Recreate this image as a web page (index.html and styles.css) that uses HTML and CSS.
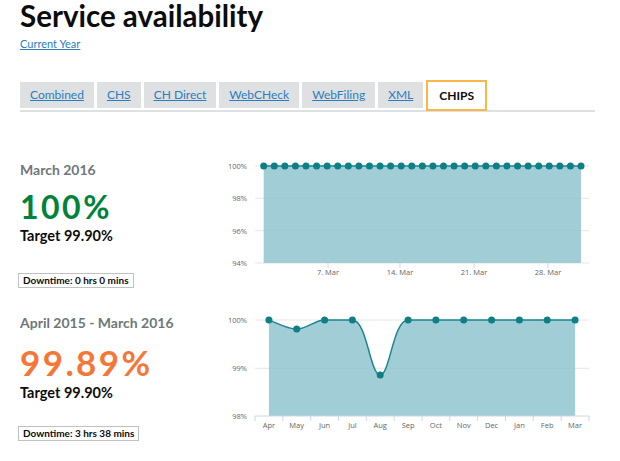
FILE: index.html
```html
<!DOCTYPE html>
<html lang="en">
<head>
<meta charset="utf-8">
<title>Service availability</title>
<link rel="stylesheet" href="styles.css">
</head>
<body>
<h1 class="title">Service availability</h1>
<p class="year"><a class="year-link" href="#">Current Year</a></p>
<ul class="tabs">
  <li class="tab"><a href="#">Combined</a></li>
  <li class="tab"><a href="#">CHS</a></li>
  <li class="tab"><a href="#">CH Direct</a></li>
  <li class="tab"><a href="#">WebCHeck</a></li>
  <li class="tab"><a href="#">WebFiling</a></li>
  <li class="tab"><a href="#">XML</a></li>
  <li class="tab tab-active">CHIPS</li>
</ul>

<section class="row row-month">
  <div class="stats">
    <h2 class="period">March 2016</h2>
    <div class="value value-good">100%</div>
    <div class="target">Target 99.90%</div>
    <div class="downtime">Downtime: 0 hrs 0 mins</div>
  </div>
  <svg class="chart" width="380" height="140" viewBox="0 0 380 140">
    <g class="grid">
      <line x1="35" x2="369" y1="16" y2="16"/>
      <line x1="35" x2="369" y1="48.3" y2="48.3"/>
      <line x1="35" x2="369" y1="80.7" y2="80.7"/>
      <line x1="35" x2="369" y1="113" y2="113"/>
    </g>
    <rect class="area" x="43.7" y="16" width="317.3" height="97"/>
    <line class="series-line" x1="43.7" x2="361" y1="16" y2="16"/>
    <g class="dots" id="dots1"></g>
    <g class="ylab">
      <text x="27" y="19">100%</text>
      <text x="27" y="51.3">98%</text>
      <text x="27" y="83.7">96%</text>
      <text x="27" y="116">94%</text>
    </g>
    <g class="ticks">
      <line x1="108" x2="108" y1="113" y2="118"/>
      <line x1="180" x2="180" y1="113" y2="118"/>
      <line x1="254" x2="254" y1="113" y2="118"/>
      <line x1="328" x2="328" y1="113" y2="118"/>
    </g>
    <g class="xlab">
      <text x="108" y="124.5">7. Mar</text>
      <text x="180" y="124.5">14. Mar</text>
      <text x="254" y="124.5">21. Mar</text>
      <text x="328" y="124.5">28. Mar</text>
    </g>
  </svg>
</section>

<section class="row row-year">
  <div class="stats">
    <h2 class="period">April 2015 - March 2016</h2>
    <div class="value value-bad">99.89%</div>
    <div class="target">Target 99.90%</div>
    <div class="downtime">Downtime: 3 hrs 38 mins</div>
  </div>
  <svg class="chart" width="380" height="155" viewBox="0 3 380 155">
    <g class="grid">
      <line x1="35" x2="369" y1="20" y2="20"/>
      <line x1="35" x2="369" y1="68.3" y2="68.3"/>
    </g>
    <path class="area" d="M48.9,20 C57,23 67,29 76.7,29 C87,29 95,20 104.6,20 L132.4,20 C147,20 150,75 160.2,75 C170,75 173,20 188.1,20 L355.1,20 L355.1,116 L48.9,116 Z"/>
    <path class="series-path" d="M48.9,20 C57,23 67,29 76.7,29 C87,29 95,20 104.6,20 L132.4,20 C147,20 150,75 160.2,75 C170,75 173,20 188.1,20 L355.1,20"/>
    <line class="axis" x1="35" x2="369" y1="116" y2="116"/>
    <g class="ticks">
      <line x1="35" x2="35" y1="116" y2="121"/>
      <line x1="62.8" x2="62.8" y1="116" y2="121"/>
      <line x1="90.7" x2="90.7" y1="116" y2="121"/>
      <line x1="118.5" x2="118.5" y1="116" y2="121"/>
      <line x1="146.3" x2="146.3" y1="116" y2="121"/>
      <line x1="174.2" x2="174.2" y1="116" y2="121"/>
      <line x1="202" x2="202" y1="116" y2="121"/>
      <line x1="229.8" x2="229.8" y1="116" y2="121"/>
      <line x1="257.7" x2="257.7" y1="116" y2="121"/>
      <line x1="285.5" x2="285.5" y1="116" y2="121"/>
      <line x1="313.3" x2="313.3" y1="116" y2="121"/>
      <line x1="341.2" x2="341.2" y1="116" y2="121"/>
      <line x1="369" x2="369" y1="116" y2="121"/>
    </g>
    <g class="dots">
      <circle cx="48.9" cy="20" r="3.5"/>
      <circle cx="76.7" cy="29" r="3.5"/>
      <circle cx="104.6" cy="20" r="3.5"/>
      <circle cx="132.4" cy="20" r="3.5"/>
      <circle cx="160.2" cy="75" r="3.5"/>
      <circle cx="188.1" cy="20" r="3.5"/>
      <circle cx="215.9" cy="20" r="3.5"/>
      <circle cx="243.7" cy="20" r="3.5"/>
      <circle cx="271.6" cy="20" r="3.5"/>
      <circle cx="299.4" cy="20" r="3.5"/>
      <circle cx="327.2" cy="20" r="3.5"/>
      <circle cx="355.1" cy="20" r="3.5"/>
    </g>
    <g class="ylab">
      <text x="27" y="23">100%</text>
      <text x="27" y="71.3">99%</text>
      <text x="27" y="119">98%</text>
    </g>
    <g class="xlab">
      <text x="48.9" y="128.3">Apr</text>
      <text x="76.7" y="128.3">May</text>
      <text x="104.6" y="128.3">Jun</text>
      <text x="132.4" y="128.3">Jul</text>
      <text x="160.2" y="128.3">Aug</text>
      <text x="188.1" y="128.3">Sep</text>
      <text x="215.9" y="128.3">Oct</text>
      <text x="243.7" y="128.3">Nov</text>
      <text x="271.6" y="128.3">Dec</text>
      <text x="299.4" y="128.3">Jan</text>
      <text x="327.2" y="128.3">Feb</text>
      <text x="355.1" y="128.3">Mar</text>
    </g>
  </svg>
</section>
<script>
  (function () {
    var g = document.getElementById('dots1');
    var ns = 'http://www.w3.org/2000/svg';
    for (var i = 0; i < 31; i++) {
      var c = document.createElementNS(ns, 'circle');
      c.setAttribute('cx', (43.7 + i * 10.577).toFixed(2));
      c.setAttribute('cy', '16');
      c.setAttribute('r', '3.5');
      g.appendChild(c);
    }
  })();
</script>
</body>
</html>
```

FILE: styles.css
```css
* { box-sizing: border-box; }
html, body { margin: 0; padding: 0; background: #fff; }
body {
  padding: 0 20px;
  font-family: "Lato", "Liberation Sans", sans-serif;
  color: #0b0c0c;
  overflow: hidden;
}
.title {
  margin: 0;
  font-size: 29.5px;
  line-height: 32px;
  font-weight: 700;
}
.year {
  margin: 5px 0 0;
  font-size: 11px;
  line-height: 14px;
}
.year-link {
  color: #2b7dc0;
  text-decoration: underline;
}
.tabs {
  list-style: none;
  display: flex;
  align-items: flex-end;
  gap: 3px;
  width: 575px;
  margin: 29px 0 0;
  padding: 0;
  border-bottom: 2px solid #dee0e2;
}
.tab {
  height: 26px;
  margin-bottom: 2px;
  padding: 0 10px;
  background: #dee0e2;
  font-size: 12px;
  line-height: 26px;
}
.tab a { color: #2b7dc0; text-decoration: underline; }
.tab-active {
  height: 31px;
  margin-bottom: -1px;
  border: 2px solid #f9b74a;
  background: #fff;
  font-weight: 700;
  line-height: 27px;
  padding: 0 11px;
  color: #0b0c0c;
}
.row {
  display: flex;
  align-items: flex-start;
}
.row-month { margin-top: 38px; height: 153px; }
.row-year { height: 158px; }
.stats {
  width: 200px;
  height: 138px;
  flex: none;
  display: flex;
  flex-direction: column;
  align-items: flex-start;
}
.period {
  margin: 0;
  padding-top: 12px;
  font-size: 14px;
  line-height: 16px;
  font-weight: 700;
  color: #6f777b;
}
.value {
  margin-top: 12px;
  font-weight: 700;
}
.value-good {
  color: #00823b;
  font-size: 32px;
  line-height: 34px;
  letter-spacing: 2.5px;
}
.value-bad {
  color: #f47738;
  font-size: 35px;
  line-height: 38px;
  letter-spacing: 2.4px;
}
.target {
  margin-top: 4px;
  font-size: 14.5px;
  line-height: 16px;
  font-weight: 700;
}
.downtime {
  margin: auto 0 0 -2px;
  padding: 0 4px;
  border: 1px solid #bfc1c3;
  font-size: 10px;
  line-height: 13px;
  font-weight: 700;
}
.chart { display: block; flex: none; }
.grid line { stroke: #e6e6e6; stroke-width: 1; }
.area { fill: #8fc4cf; fill-opacity: 0.85; }
.series-line, .series-path { stroke: #1c8590; stroke-width: 1.5; fill: none; }
.dots circle { fill: #0e7f86; }
.axis { stroke: #ccd6eb; stroke-width: 1; }
.ticks line { stroke: #ccd6eb; stroke-width: 1; }
.ylab text {
  font-family: "Open Sans", "DejaVu Sans", sans-serif;
  font-size: 7.5px;
  fill: #666;
  text-anchor: end;
}
.xlab text {
  font-family: "Open Sans", "DejaVu Sans", sans-serif;
  font-size: 7.5px;
  fill: #666;
  text-anchor: middle;
}
```
